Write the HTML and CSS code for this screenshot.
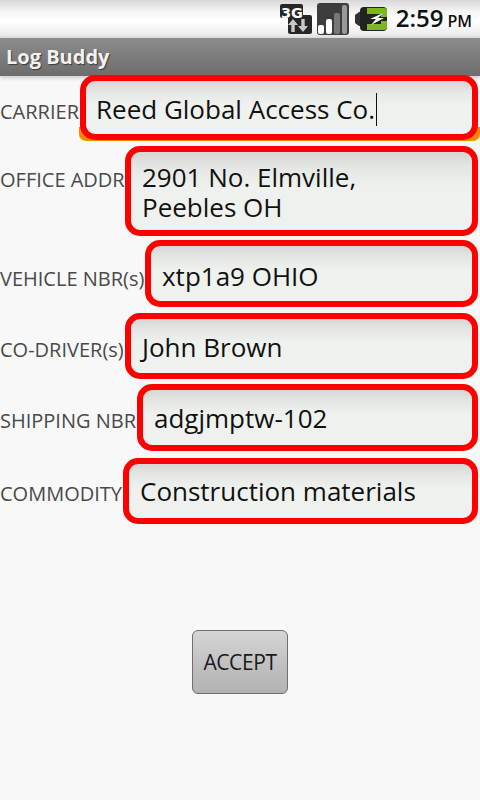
FILE: index.html
```
<!DOCTYPE html>
<html lang="en">
<head>
<meta charset="utf-8">
<title>Log Buddy</title>
<link rel="stylesheet" href="styles.css">
</head>
<body>
<div class="screen">
  <header class="status">
    <svg class="ic-3g" width="33" height="32" viewBox="0 0 33 32">
      <path d="M3 1h19a2 2 0 0 1 2 2v9h7a2 2 0 0 1 2 2v15a2 2 0 0 1-2 2H11a2 2 0 0 1-2-2v-14H3a2 2 0 0 1-2-2V3a2 2 0 0 1 2-2z" fill="#262626"/>
      <text class="ic-3g-text" x="2" y="14.500">3G</text>
      <path d="M12.300 29v-7H9l5-6 5 6h-3.300v7z" fill="#c8c8c8"/>
      <path d="M22.300 16v7H19l5 6 5-6h-3.300v-7z" fill="#c8c8c8"/>
    </svg>
    <svg class="ic-signal" width="33" height="32" viewBox="0 0 33 32">
      <rect x="0" y="0" width="32" height="32" rx="3" fill="#3d3d3d"/>
      <rect x="1" y="22" width="6" height="9" rx="2" fill="#fff"/>
      <rect x="9" y="16" width="6" height="15" rx="2" fill="#fff"/>
      <rect x="17" y="10" width="6" height="21" rx="2" fill="#777"/>
      <rect x="25" y="2" width="5" height="29" rx="2" fill="#999"/>
    </svg>
    <svg class="ic-batt" width="33" height="26" viewBox="0 0 33 26">
      <path d="M0 9l4-3h3v14H4l-4-3z" fill="#333"/>
      <rect x="5" y="1" width="27" height="24" rx="4" fill="#222"/>
      <path d="M12 2h17a3 3 0 0 1 3 3v6h-6V8H12zM12 18h14v-3h6v6a3 3 0 0 1-3 3H12z" fill="#7fb51f"/>
      <path d="M28 7L15 13h6l-5 6 13-7h-6z" fill="#fff"/>
    </svg>
    <span class="clock">2:59<span class="ampm">PM</span></span>
  </header>
  <div class="titlebar">Log Buddy</div>
  <main class="form">
    <div class="row row-carrier">
      <span class="label">CARRIER</span>
      <div class="field field-focus"><span class="val">Reed Global Access Co.</span><span class="caret"></span></div>
    </div>
    <div class="row row-office">
      <span class="label">OFFICE ADDR</span>
      <div class="field"><span class="val val-multi">2901 No. Elmville,<br>Peebles OH</span></div>
    </div>
    <div class="row row-vehicle">
      <span class="label">VEHICLE NBR(s)</span>
      <div class="field"><span class="val">xtp1a9 OHIO</span></div>
    </div>
    <div class="row row-codriver">
      <span class="label">CO-DRIVER(s)</span>
      <div class="field"><span class="val">John Brown</span></div>
    </div>
    <div class="row row-shipping">
      <span class="label">SHIPPING NBR</span>
      <div class="field"><span class="val">adgjmptw-102</span></div>
    </div>
    <div class="row row-commodity">
      <span class="label">COMMODITY</span>
      <div class="field"><span class="val">Construction materials</span></div>
    </div>
  </main>
  <div class="actions"><button class="accept" type="button">ACCEPT</button></div>
</div>
</body>
</html>
```
FILE: styles.css
```
* { box-sizing: border-box; }
html, body { margin: 0; padding: 0; }
body { width: 480px; height: 800px; overflow: hidden; background: #f8f8f8; font-family: "Open Sans", "Noto Sans", sans-serif; }
.screen { width: 480px; height: 800px; display: flex; flex-direction: column; }

.status { height: 38px; flex: none; display: flex; align-items: center; justify-content: flex-end; padding: 0 8px 0 0;
  background: linear-gradient(#d8d8d8 0, #f4f4f4 30%, #ffffff 55%, #ececec 90%, #dcdcdc 100%); }
.ic-3g, .ic-signal { margin-right: 5px; }
.ic-batt { margin-right: 8px; }
.ic-3g-text { font: 700 14.5px "DejaVu Sans", sans-serif; fill: #fff; }
.clock { font-size: 24px; font-weight: 600; color: #111; line-height: 38px; white-space: nowrap; }
.ampm { font-size: 16px; margin-left: 4px; }

.titlebar { height: 38px; flex: none; padding-left: 6px; line-height: 37px; font-size: 20px; font-weight: 700; color: #f2f2f2;
  text-shadow: 1px 1px 1px #3c3c3c; background: linear-gradient(#8c8c8c, #6d6d6d); box-shadow: 0 2px 4px rgba(0, 0, 0, 0.18); }

.form { display: flex; flex-direction: column; margin-top: -1px; padding: 0 2px 0 0; }
.row { display: flex; align-items: baseline; }
.row-carrier { height: 65px; }
.row-office { height: 90px; margin-top: 6px; }
.row-vehicle { height: 67px; margin-top: 4px; }
.row-codriver { height: 66px; margin-top: 6px; }
.row-shipping { height: 67px; margin-top: 5px; }
.row-commodity { height: 66px; margin-top: 7px; }

.label { font-size: 20px; color: #4a4a4a; white-space: nowrap; }
.row-carrier .label { width: 80px; }
.row-office .label { width: 125px; }
.row-vehicle .label { width: 145px; }
.row-codriver .label { width: 125px; }
.row-shipping .label { width: 137px; }
.row-commodity .label { width: 123px; }

.field { position: relative; flex: 1; height: 100%; display: flex; align-items: flex-start; padding: 12px 10px 0 11px;
  border: 6px solid #ff0000; border-radius: 15px; background: linear-gradient(#d6d7d5 0, #e6e8e5 22%, #eff1ee 45%, #eff1ee 100%); }
.row-office .field { padding-top: 10px; }
.row-vehicle .field { padding-top: 14px; }
.row-commodity .field { padding-top: 11px; }
.field-focus { padding-left: 10px; }
.field-focus::before { content: ""; position: absolute; left: -7px; right: -8px; bottom: -7px; height: 14px; border-radius: 0 0 7px 7px; background: #f58a00; z-index: -1; }

.val { font-size: 26px; line-height: 33px; color: #111; white-space: nowrap; }
.val-multi { line-height: 30px; }
.caret { flex: none; width: 1px; height: 33px; background: #111; margin-left: 1px; }

.actions { display: flex; justify-content: center; padding: 106px 0 0 0; }
.accept { width: 96px; height: 64px; padding: 0; font: 400 21px "Open Sans", "Noto Sans", sans-serif; letter-spacing: -0.4px; color: #1a1a1a;
  border: 1px solid #6f6f6f; border-radius: 6px; background: linear-gradient(#d6d6d6, #c2c2c2 50%, #b2b2b2); }
```
